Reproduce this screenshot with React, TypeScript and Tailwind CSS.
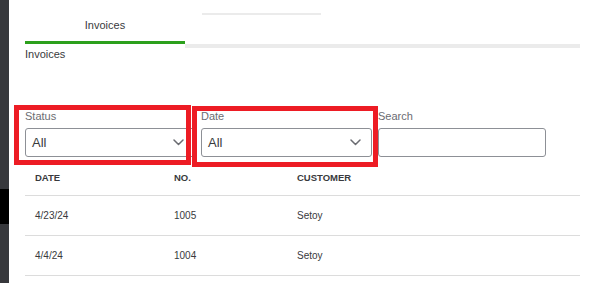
import React from "react";

const Chevron = () => (
  <svg width="11" height="7" viewBox="0 0 11 7" fill="none">
    <path d="M1 1l4.5 4.5L10 1" stroke="#6b6c72" strokeWidth="1.5" strokeLinecap="round" strokeLinejoin="round" />
  </svg>
);

const Select = ({ label }: { label: string }) => (
  <div className="flex flex-col">
    <div className="text-[11px] leading-[16px] text-[#6b6c72]">{label}</div>
    <div className="mt-[4px] h-[29px] border border-[#8d9096] rounded-[3px] flex items-center justify-between pl-[6px] pr-[10px] bg-white">
      <span className="text-[13px] text-[#393a3d]">All</span>
      <Chevron />
    </div>
  </div>
);

export default function App() {
  const rows = [
    { date: "4/23/24", no: "1005", customer: "Setoy" },
    { date: "4/4/24", no: "1004", customer: "Setoy" },
  ];
  return (
    <div
      className="relative w-[591px] h-[283px] overflow-hidden bg-white flex"
      style={{ fontFamily: '"Liberation Sans", Arial, sans-serif' }}
    >
      <div className="w-[9px] shrink-0 bg-[#37383c] flex flex-col">
        <div className="mt-[189px] h-[35px] bg-black" />
      </div>
      <div className="flex-1 pl-[16px] pr-[11px] flex flex-col">
        <div className="flex h-[44px]">
          <div className="w-[160px] border-b-[3px] border-[#2ca01c] flex items-center justify-center pt-[9px]">
            <span className="text-[11px] leading-[16px] text-[#393a3d]">Invoices</span>
          </div>
          <div className="w-[160px] pl-[17px] pt-[13px]">
            <div className="w-[119px] h-[2px] bg-[#ebebeb]" />
          </div>
        </div>
        <div className="ml-[160px] h-[4px] bg-[#ebebeb]" />
        <div className="text-[11px] leading-[12px] text-[#393a3d]">Invoices</div>

        <div className="mt-[48px] grid grid-cols-[170px_171px_168px] gap-x-[6px]">
          <Select label="Status" />
          <Select label="Date" />
          <div className="flex flex-col">
            <div className="text-[11px] leading-[16px] text-[#6b6c72]">Search</div>
            <div className="mt-[4px] h-[29px] border border-[#8d9096] rounded-[3px] bg-white" />
          </div>
        </div>

        <div className="mt-[4px]">
          <div className="grid grid-cols-[139px_123px_1fr] h-[35px] items-center border-b border-[#dcdcdc] pl-[10px] text-[9.5px] font-bold text-[#393a3d]">
            <div>DATE</div>
            <div>NO.</div>
            <div>CUSTOMER</div>
          </div>
          {rows.map((r) => (
            <div
              key={r.no}
              className="grid grid-cols-[139px_123px_1fr] h-[40px] items-center border-b border-[#dcdcdc] pl-[10px] text-[10px] text-[#393a3d]"
            >
              <div>{r.date}</div>
              <div>{r.no}</div>
              <div>{r.customer}</div>
            </div>
          ))}
        </div>
      </div>

      <div className="absolute left-[14px] top-[105px] w-[177px] h-[60px] border-[5px] border-[#ed1c24]" />
      <div className="absolute left-[192px] top-[106px] w-[186px] h-[61px] border-[5px] border-[#ed1c24]" />
    </div>
  );
}
